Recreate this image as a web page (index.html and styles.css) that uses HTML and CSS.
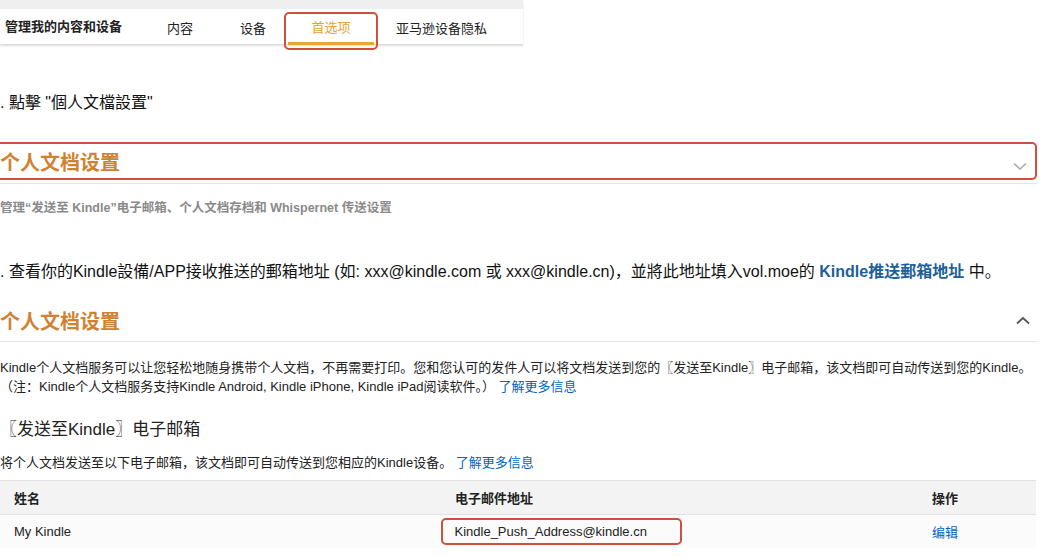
FILE: index.html
```html
<!DOCTYPE html>
<html lang="zh">
<head>
	<meta charset="UTF-8">
	<title>管理我的内容和设备</title>
	<link rel="stylesheet" href="styles.css">
</head>
<body>
	<div class="topnav">
		<div class="nav-bar">
			<span class="nav-title">管理我的内容和设备</span>
			<span class="nav-tab">内容</span>
			<span class="nav-tab">设备</span>
			<span class="nav-tab on">首选项</span>
			<span class="nav-tab">亚马逊设备隐私</span>
		</div>
	</div>

	<p class="step">. 點擊 "個人文檔設置"</p>

	<div class="sect-head mark-box">
		<h2>个人文档设置</h2>
		<svg class="chev" width="14" height="9" viewBox="0 0 14 9"><path d="M1 1.5 L7 7 L13 1.5" fill="none" stroke="#aaa" stroke-width="1.6"/></svg>
	</div>
	<div class="sect-line"></div>
	<p class="sect-desc">管理“发送至 Kindle”电子邮箱、个人文档存档和 Whispernet 传送设置</p>

	<p class="step step-3">. 查看你的Kindle設備/APP接收推送的郵箱地址 (如: xxx@kindle.com 或 xxx@kindle.cn)，並將此地址填入vol.moe的 <a class="strong-link">Kindle推送郵箱地址</a> 中。</p>

	<div class="sect-head open">
		<h2>个人文档设置</h2>
		<svg class="chev" width="14" height="9" viewBox="0 0 14 9"><path d="M1 7.5 L7 2 L13 7.5" fill="none" stroke="#555" stroke-width="1.8"/></svg>
	</div>
	<p class="intro">Kindle个人文档服务可以让您轻松地随身携带个人文档，不再需要打印。您和您认可的发件人可以将文档发送到您的〖发送至Kindle〗电子邮箱，该文档即可自动传送到您的Kindle。<br>（注：Kindle个人文档服务支持Kindle Android, Kindle iPhone, Kindle iPad阅读软件。）&nbsp;<a class="link">了解更多信息</a></p>

	<h3 class="sub-head">〖发送至Kindle〗电子邮箱</h3>
	<p class="intro intro-2">将个人文档发送至以下电子邮箱，该文档即可自动传送到您相应的Kindle设备。 <a class="link">了解更多信息</a></p>

	<table class="mail-table">
		<thead>
			<tr>
				<th class="col-name">姓名</th>
				<th class="col-mail">电子邮件地址</th>
				<th>操作</th>
			</tr>
		</thead>
		<tbody>
			<tr>
				<td>My Kindle</td>
				<td class="mail-cell"><span class="mail">Kindle_Push_Address@kindle.cn</span></td>
				<td><a class="link">编辑</a></td>
			</tr>
		</tbody>
	</table>
</body>
</html>
```

FILE: styles.css
```css
html, body {
	margin: 0;
	padding: 0;
	background: #fff;
}
body {
	width: 1037px;
	overflow: hidden;
	font-family: "Liberation Sans", Arial, "Noto Sans CJK SC", sans-serif;
	color: #111;
}
p, h2, h3 {
	margin: 0;
}
a {
	cursor: pointer;
}
.link {
	color: #0066c0;
}

/* 顶部导航 */
.topnav {
	width: 523px;
	border-top: 9px solid #efefef;
	background: #fff;
	box-shadow: 0 2px 2px rgba(0, 0, 0, .14);
}
.nav-bar {
	display: flex;
	align-items: center;
	height: 35px;
	font-family: "Noto Sans CJK SC", sans-serif;
	font-size: 13px;
	color: #222;
	white-space: nowrap;
}
.nav-bar span {
	flex-shrink: 0;
}
.nav-title {
	font-weight: bold;
	padding-left: 5px;
	margin-right: 45px;
	margin-top: -3px;
}
.nav-tab {
	margin-right: 47px;
	margin-top: 2px;
}
.nav-tab:nth-child(3) {
	margin-right: 22px;
}
.nav-tab.on {
	position: relative;
	width: 86px;
	height: 35px;
	line-height: 35px;
	margin: 0 22px 0 0;
	text-align: center;
	color: #e4a23a;
}
.nav-tab.on::after {
	content: "";
	position: absolute;
	left: 0;
	right: 0;
	bottom: -1px;
	height: 3px;
	background: #e8a53e;
}
/* 红色标注框 */
.nav-tab.on::before {
	content: "";
	position: absolute;
	left: -4px;
	right: -4px;
	top: 3px;
	bottom: -6px;
	border: 2.5px solid #d0503f;
	border-radius: 5px;
}

/* 步骤文字 */
.step {
	font-family: "Liberation Sans", Arial, "Noto Sans CJK TC", sans-serif;
	font-size: 16px;
	line-height: 20px;
	margin-top: 49px;
	color: #111;
}
.step-3 {
	line-height: 22px;
	margin-top: 44px;
}
.strong-link {
	font-weight: bold;
	color: #1d5f99;
}

/* 个人文档设置 */
.sect-head {
	display: flex;
	align-items: center;
	justify-content: space-between;
}
.sect-head h2 {
	font-family: "Noto Sans CJK SC", sans-serif;
	font-size: 20px;
	font-weight: bold;
	color: #cf8232;
}
.mark-box {
	height: 34px;
	margin-top: 29px;
	margin-left: -10px;
	padding-left: 10px;
	border: 2.5px solid #d0503f;
	border-left: none;
	border-radius: 0 5px 5px 0;
}
.mark-box .chev {
	margin: 10px 8px 0 0;
}
.sect-line {
	margin-top: 3px;
	border-top: 1px solid #e6e6e6;
}
.sect-desc {
	margin-top: 15px;
	font-family: "Liberation Sans", Arial, "Noto Sans CJK SC", sans-serif;
	font-size: 12.5px;
	font-weight: bold;
	line-height: 18px;
	color: #8a8a8a;
}
.open {
	height: 42px;
	margin-top: 16px;
	border-bottom: 1px solid #e6e6e6;
}
.open .chev {
	margin: 0 7px 0 0;
}

/* 说明文字 */
.intro {
	margin-top: 16px;
	font-family: "Liberation Sans", Arial, "Noto Sans CJK SC", sans-serif;
	font-size: 13px;
	line-height: 19px;
	color: #222;
}
.sub-head {
	margin-top: 22px;
	font-family: "Liberation Sans", Arial, "Noto Sans CJK SC", sans-serif;
	font-size: 17px;
	font-weight: normal;
	line-height: 24px;
	color: #222;
}
.intro-2 {
	margin-top: 11px;
}

/* 邮箱表格 */
.mail-table {
	width: 1036px;
	margin-top: 8px;
	border-collapse: collapse;
	font-family: "Liberation Sans", Arial, "Noto Sans CJK SC", sans-serif;
	font-size: 13px;
	color: #222;
}
.mail-table th,
.mail-table td {
	text-align: left;
	padding: 0 14px;
	height: 33px;
	border-top: 1px solid #e2e2e2;
}
.mail-table th {
	font-weight: bold;
	background: #f3f3f3;
}
.mail-table td {
	background: #fbfbfb;
}
.col-name {
	width: 413px;
}
.col-mail {
	width: 449px;
}
.mail-table .mail-cell {
	padding-left: 0;
}
.mail {
	display: inline-block;
	padding: 2.5px 33px 2.5px 11.5px;
	line-height: 18px;
	border: 2.5px solid #d0503f;
	border-radius: 5px;
}
```
